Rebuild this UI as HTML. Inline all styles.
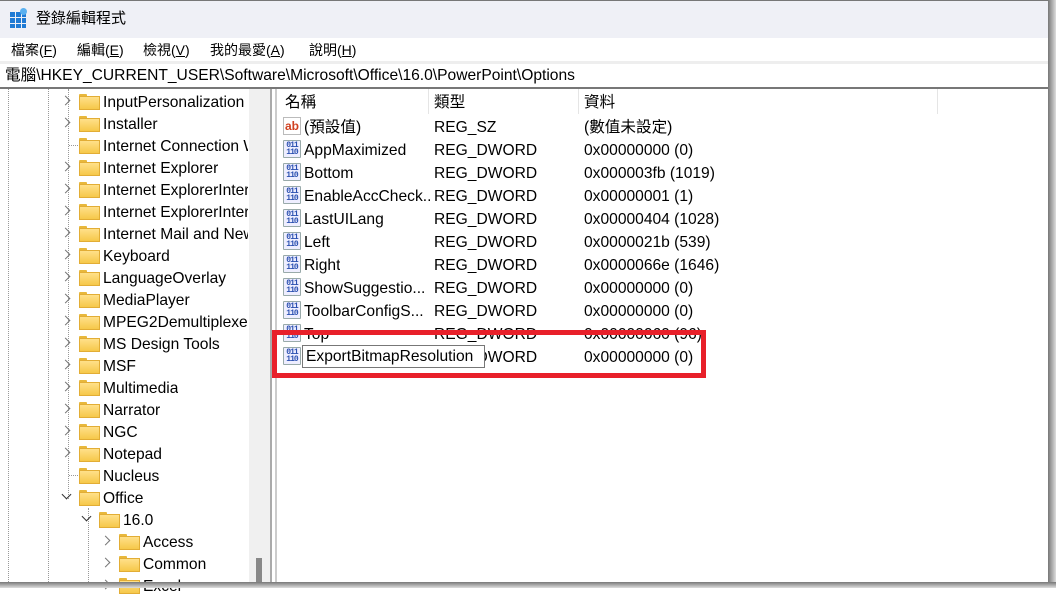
<!DOCTYPE html>
<html><head><meta charset="utf-8"><style>
*{margin:0;padding:0;box-sizing:border-box}
body{width:1056px;height:588px;background:#fff;position:relative;overflow:hidden;font-family:"Liberation Sans","Noto Sans CJK TC",sans-serif;font-size:15.6px;color:#000}
.a{position:absolute;white-space:nowrap;line-height:20px}
.fold{position:absolute;width:19px;height:14px}
.fold:before{content:"";position:absolute;left:0;top:0;width:8px;height:3px;background:#e8b83c;border-radius:1px 1px 0 0}
.fold:after{content:"";position:absolute;left:0;top:2px;width:19px;height:12px;background:linear-gradient(#ffe08a,#f6c84a);border:1px solid #e2ad35}
.chev{position:absolute;width:7px;height:7px;border-right:1.5px solid #777;border-bottom:1.5px solid #777;transform:rotate(-45deg)}
.chevd{position:absolute;width:7px;height:7px;border-right:1.5px solid #333;border-bottom:1.5px solid #333;transform:rotate(45deg)}
.ic{position:absolute;width:18px;height:18px;border:1px solid #9aa;background:#eef;border-radius:1px;font:bold 8px/7px "Liberation Mono",monospace;color:#2a4fb0;text-align:center;padding-top:1px;letter-spacing:-1px}
.ab{position:absolute;width:18px;height:18px;border:1px solid #bbb;background:#fff;font:bold 12px/16px "Liberation Sans",sans-serif;color:#d04020;text-align:center}
</style></head><body>
<div class="a" style="left:0;top:0;width:1048px;height:38px;background:#eff0f6;border-top:1px solid #777"></div>
<div class="a" style="left:10px;top:12px;width:16px;height:16px;background:
linear-gradient(90deg,transparent 5px,#eff0f6 5px,#eff0f6 6px,transparent 6px,transparent 11px,#eff0f6 11px,#eff0f6 12px,transparent 12px),
linear-gradient(transparent 5px,#eff0f6 5px,#eff0f6 6px,transparent 6px,transparent 11px,#eff0f6 11px,#eff0f6 12px,transparent 12px),#1f7ad4"></div>
<div class="a" style="left:20px;top:8px;width:7px;height:7px;background:#5ab0f0;border-radius:50%"></div>
<div class="a" style="left:36px;top:9px;font-size:15px">登錄編輯程式</div>
<div class="a" style="left:11px;top:40px;font-size:14px">檔案(<u>F</u>)</div>
<div class="a" style="left:77px;top:40px;font-size:14px">編輯(<u>E</u>)</div>
<div class="a" style="left:143px;top:40px;font-size:14px">檢視(<u>V</u>)</div>
<div class="a" style="left:210px;top:40px;font-size:14px">我的最愛(<u>A</u>)</div>
<div class="a" style="left:309px;top:40px;font-size:14px">說明(<u>H</u>)</div>
<div class="a" style="left:0;top:61px;width:1048px;height:3px;background:#eeeeee"></div>
<div class="a" style="left:5px;top:66px">電腦\HKEY_CURRENT_USER\Software\Microsoft\Office\16.0\PowerPoint\Options</div>
<div class="a" style="left:0;top:87px;width:1048px;height:2px;background:#777"></div>
<div class="a" style="left:249px;top:89px;width:21px;height:493px;background:#f0f0f0"></div>
<div class="a" style="left:256px;top:558px;width:6px;height:24px;background:#888"></div>
<div class="a" style="left:270px;top:89px;width:2px;height:493px;background:#aaa"></div>
<div class="a" style="left:275px;top:89px;width:2px;height:493px;background:#ccc"></div>
<div class="a" style="left:8px;top:89px;height:493px;border-left:1px dotted #999"></div>
<div class="a" style="left:48px;top:89px;height:493px;border-left:1px dotted #999"></div>
<div class="a" style="left:68px;top:89px;height:410px;border-left:1px dotted #999"></div>
<div class="a" style="left:88px;top:508px;height:74px;border-left:1px dotted #999"></div>
<div id="tree"></div>
<div class="a" style="left:285px;top:93px">名稱</div>
<div class="a" style="left:428px;top:89px;width:1px;height:25px;background:#e5e5e5"></div>
<div class="a" style="left:434px;top:93px">類型</div>
<div class="a" style="left:578px;top:89px;width:1px;height:25px;background:#e5e5e5"></div>
<div class="a" style="left:584px;top:93px">資料</div>
<div class="a" style="left:937px;top:89px;width:1px;height:25px;background:#e5e5e5"></div>
<div id="list"></div>
<div class="a" style="left:272px;top:330px;width:434px;height:48px;border:5px solid #e8202a"></div>
<div class="a" style="left:302px;top:345px;width:183px;height:23px;border:1px solid #777;background:#fff;padding:0 0 0 3px;line-height:22px">ExportBitmapResolution</div>
<script>
var t=[["InputPersonalization",1],["Installer",1],["Internet Connection W",0],["Internet Explorer",1],["Internet ExplorerInter",1],["Internet ExplorerInter",1],["Internet Mail and New",1],["Keyboard",1],["LanguageOverlay",1],["MediaPlayer",1],["MPEG2Demultiplexer",1],["MS Design Tools",1],["MSF",1],["Multimedia",1],["Narrator",1],["NGC",1],["Notepad",1],["Nucleus",0],["Office",2],["16.0",3],["Access",4],["Common",4],["Excel",4]];
var h="";
t.forEach(function(r,i){var y=101+i*22;var x=79;
if(r[1]==3)x=99;if(r[1]==4)x=119;
if(r[1]==1)h+='<div class="chev" style="left:62px;top:'+(y-4)+'px"></div>';
if(r[1]==2)h+='<div class="chevd" style="left:63px;top:'+(y-6)+'px"></div>';
if(r[1]==3)h+='<div class="chevd" style="left:83px;top:'+(y-6)+'px"></div>';
if(r[1]==4)h+='<div class="chev" style="left:102px;top:'+(y-4)+'px"></div>';
if(r[1]==0)h+='<div class="a" style="left:69px;top:'+y+'px;width:9px;height:1px;border-top:1px dotted #999"></div>';
h+='<div class="fold" style="left:'+x+'px;top:'+(y-7)+'px"></div>';
h+='<div class="a" style="left:'+(x+24)+'px;top:'+(y-8)+'px;max-width:'+(248-x-24)+'px;overflow:hidden">'+r[0]+'</div>';});
document.getElementById("tree").innerHTML=h;
var l=[["(預設值)","REG_SZ","(數值未設定)"],["AppMaximized","REG_DWORD","0x00000000 (0)"],["Bottom","REG_DWORD","0x000003fb (1019)"],["EnableAccCheck...","REG_DWORD","0x00000001 (1)"],["LastUILang","REG_DWORD","0x00000404 (1028)"],["Left","REG_DWORD","0x0000021b (539)"],["Right","REG_DWORD","0x0000066e (1646)"],["ShowSuggestio...","REG_DWORD","0x00000000 (0)"],["ToolbarConfigS...","REG_DWORD","0x00000000 (0)"],["Top","REG_DWORD","0x00000060 (96)"],["","REG_DWORD","0x00000000 (0)"]];
h="";
l.forEach(function(r,i){var y=126+i*23;
h+=(i==0?'<div class="ab" style="left:283px;top:'+(y-9)+'px">ab</div>':'<div class="ic" style="left:283px;top:'+(y-9)+'px">011<br>110</div>');
h+='<div class="a" style="left:304px;top:'+(y-8)+'px;max-width:126px;overflow:hidden">'+r[0]+'</div><div class="a" style="left:434px;top:'+(y-8)+'px">'+r[1]+'</div><div class="a" style="left:584px;top:'+(y-8)+'px">'+r[2]+'</div>';});
document.getElementById("list").innerHTML=h;
</script>
<div class="a" style="left:1048px;top:0;width:8px;height:588px;background:linear-gradient(90deg,#777,#ddd)"></div>
<div class="a" style="left:0;top:582px;width:1056px;height:6px;background:linear-gradient(#777,#ddd)"></div>
</body></html>
